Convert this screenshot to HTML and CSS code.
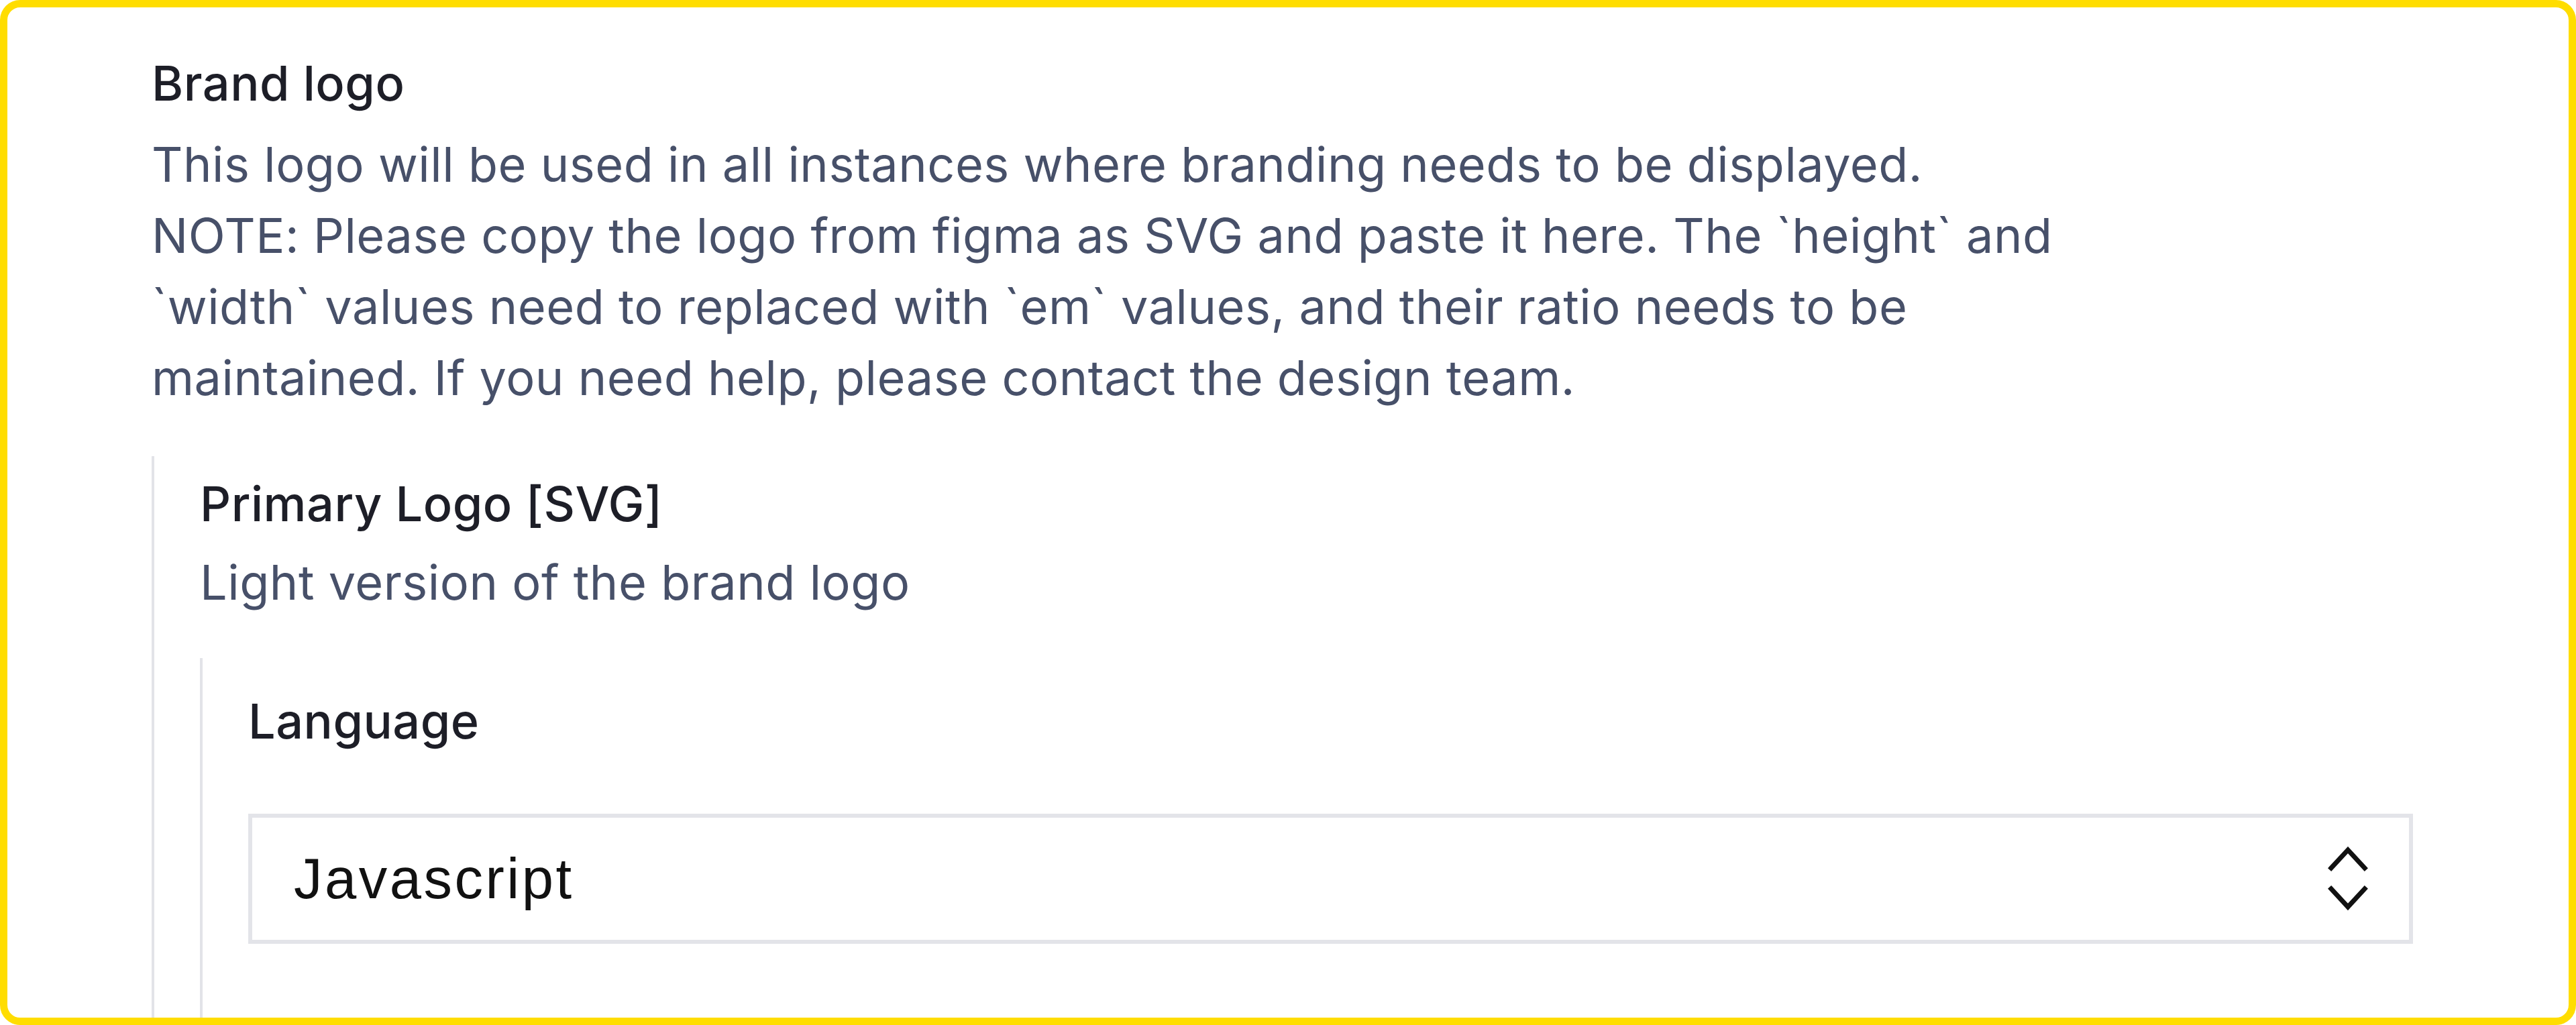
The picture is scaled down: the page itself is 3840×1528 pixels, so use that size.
FILE: index.html
```html
<!DOCTYPE html>
<html lang="en">
<head>
<meta charset="utf-8">
<title>Brand logo settings</title>
<link rel="stylesheet" href="styles.css">
</head>
<body>
<div class="frame">
  <section class="field">
    <h3 class="field-title">Brand logo</h3>
    <p class="field-desc field-desc-wide">This logo will be used in all instances where branding needs to be displayed.<br>NOTE: Please copy the logo from figma as SVG and paste it here. The `height` and `width` values need to replaced with `em` values, and their ratio needs to be maintained. If you need help, please contact the design team.</p>
    <div class="nested">
      <h4 class="field-title">Primary Logo [SVG]</h4>
      <p class="field-desc field-desc-tight">Light version of the brand logo</p>
      <div class="nested nested-inner">
        <label class="field-title">Language</label>
        <div class="select">
          <span class="select-value">Javascript</span>
          <svg class="select-icon" viewBox="0 0 60 96" width="60" height="96" aria-hidden="true">
            <path d="M5 32 L30 5 L55 32" fill="none" stroke="#111" stroke-width="7" stroke-linecap="square" stroke-linejoin="miter"/>
            <path d="M5 63 L30 90 L55 63" fill="none" stroke="#111" stroke-width="7" stroke-linecap="square" stroke-linejoin="miter"/>
          </svg>
        </div>
      </div>
    </div>
  </section>
</div>
</body>
</html>
```
FILE: styles.css
```css
html, body {
  margin: 0;
  padding: 0;
  background: #ffffff;
}

body {
  font-family: Inter, "Noto Sans", "Liberation Sans", sans-serif;
}

.frame {
  box-sizing: border-box;
  width: 3840px;
  height: 1528px;
  border: 11px solid #ffdd00;
  border-radius: 30px;
  background: #ffffff;
  overflow: hidden;
  padding: 60px 232px 0 215px;
}

.field {
  display: flex;
  flex-direction: column;
}

.field-title {
  display: block;
  margin: 0;
  font-size: 72px;
  line-height: 106px;
  letter-spacing: 0.5px;
  font-weight: 500;
  color: #1d1e27;
}

.field-desc {
  margin: 15px 0 0;
  font-size: 72px;
  line-height: 106px;
  letter-spacing: 0.5px;
  font-weight: 400;
  color: #475069;
}

.field-desc-wide {
  max-width: 2950px;
}

.field-desc-tight {
  margin-top: 11px;
}

.nested {
  display: flex;
  flex-direction: column;
  margin-top: 64px;
  padding: 18px 0 0 68px;
  border-left: 4px solid #e2e3e8;
}

.nested-inner {
  margin-top: 60px;
  padding-top: 41px;
  padding-bottom: 300px;
}

.select {
  box-sizing: border-box;
  margin-top: 85px;
  height: 194px;
  border: 6px solid #e3e4e9;
  background: #ffffff;
  display: flex;
  align-items: center;
  justify-content: space-between;
  padding: 0 61px 0 62px;
}

.select-value {
  font-family: "Liberation Sans", Arial, sans-serif;
  font-size: 85px;
  letter-spacing: 3.5px;
  color: #111111;
}

.select-icon {
  display: block;
  flex: none;
}
```
